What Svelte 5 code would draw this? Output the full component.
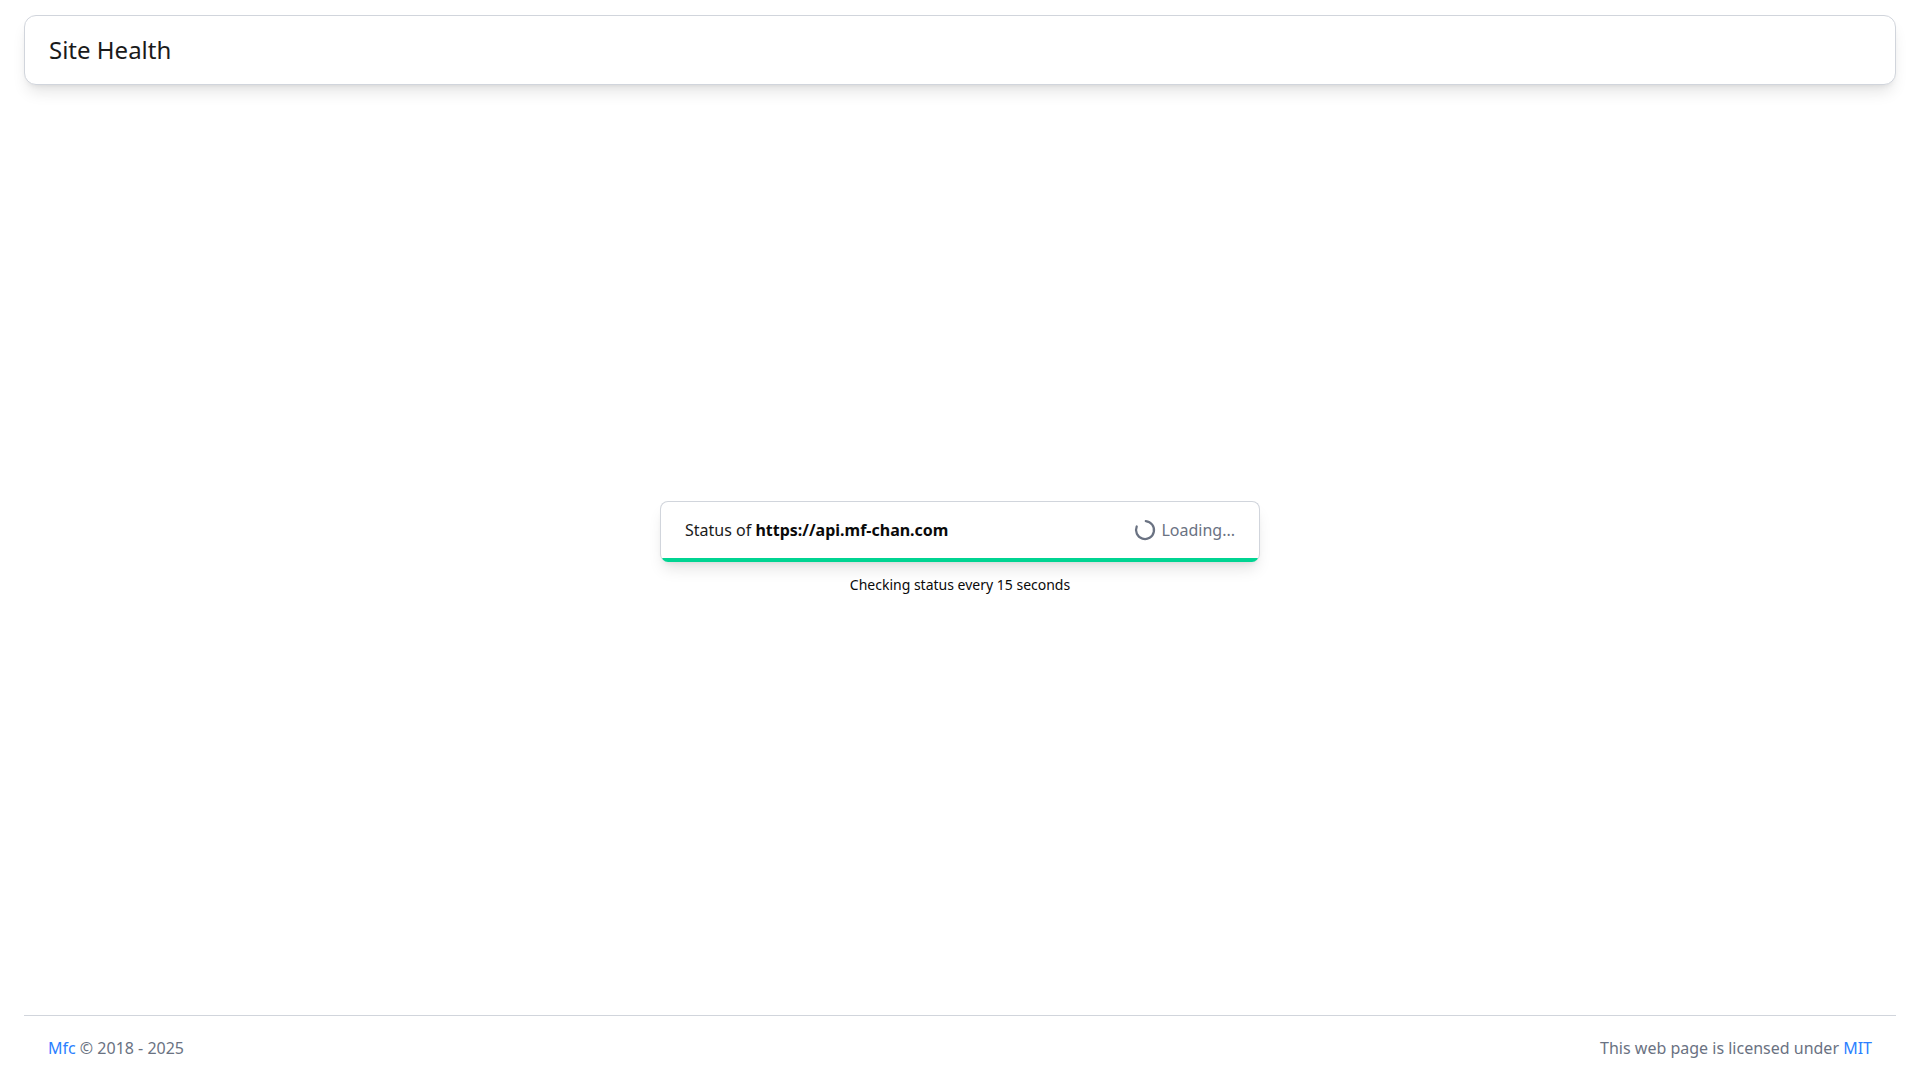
<script>
	const intervalSeconds = 15;
</script>

<div class="page">
	<header class="topbar">
		<h1>Site Health</h1>
	</header>

	<main class="content">
		<div class="status-card">
			<div class="status-row">
				<span class="status-label">Status of <strong>https://api.mf-chan.com</strong></span>
				<span class="status-state">
					<svg class="spinner" viewBox="0 0 24 24" width="24" height="24" fill="none">
						<path d="M21 12a9 9 0 1 1-6.219-8.56" transform="rotate(-85 12 12)" stroke="#6a7282" stroke-width="2.25" stroke-linecap="round" />
					</svg>
					Loading...
				</span>
			</div>
			<div class="status-bar"></div>
		</div>
		<p class="hint">Checking status every {intervalSeconds} seconds</p>
	</main>

	<footer class="footer">
		<span><a href="#top">Mfc</a> © 2018 - 2025</span>
		<span>This web page is licensed under <a href="#top">MIT</a></span>
	</footer>
</div>

<style>
	:global(body) {
		margin: 0;
		background: #fff;
		font-family: "Noto Sans", sans-serif;
		color: #0a0a0a;
	}

	.page {
		display: flex;
		flex-direction: column;
		height: 1080px;
		padding: 15px 24px 0;
		box-sizing: border-box;
	}

	.topbar {
		display: flex;
		align-items: center;
		height: 70px;
		padding: 0 24px 2px;
		box-sizing: border-box;
		background: #fff;
		border: 1px solid #d1d5dc;
		border-radius: 12px;
		box-shadow: 0 10px 15px -3px rgba(0, 0, 0, 0.1), 0 4px 6px -4px rgba(0, 0, 0, 0.1);
	}

	h1 {
		margin: 0;
		font-size: 24px;
		font-weight: 400;
		color: #1a1a1a;
	}

	.content {
		flex: 1;
		display: flex;
		flex-direction: column;
		align-items: center;
		justify-content: center;
		padding-bottom: 6px;
	}

	.status-card {
		width: 600px;
		box-sizing: border-box;
		background: #fff;
		border: 1px solid #d1d5dc;
		border-bottom: none;
		border-radius: 8px;
		overflow: hidden;
		box-shadow: 0 10px 15px -3px rgba(0, 0, 0, 0.1), 0 4px 6px -4px rgba(0, 0, 0, 0.1);
	}

	.status-row {
		display: flex;
		align-items: center;
		justify-content: space-between;
		height: 56px;
		padding: 0 24px;
		font-size: 16px;
		color: #1a1a1a;
	}

	strong {
		color: #0a0a0a;
	}

	.status-state {
		display: flex;
		align-items: center;
		gap: 4px;
		color: #6a7282;
	}

	.status-bar {
		height: 4px;
		background: #00d492;
	}

	.hint {
		margin: 13px 0 0;
		font-size: 14px;
	}

	.footer {
		display: flex;
		justify-content: space-between;
		align-items: center;
		height: 64px;
		padding: 0 24px;
		border-top: 1px solid #d1d5dc;
		font-size: 16px;
		color: #6a7282;
	}

	a {
		color: #2b7fff;
		text-decoration: none;
	}
</style>
